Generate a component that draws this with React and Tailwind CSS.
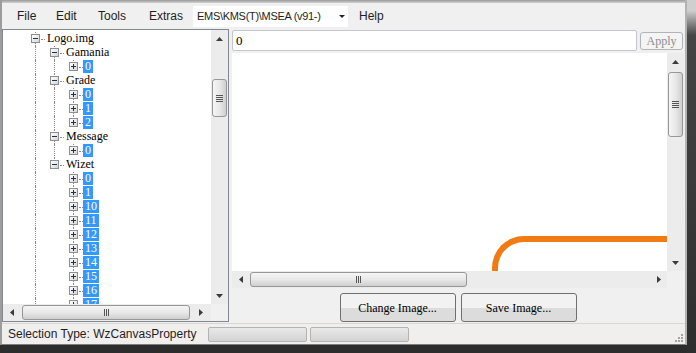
import React from 'react';

const TREE = {
  label: 'Logo.img',
  children: [
    { label: 'Gamania', children: ['0'] },
    { label: 'Grade', children: ['0', '1', '2'] },
    { label: 'Message', children: ['0'] },
    { label: 'Wizet', children: ['0', '1', '10', '11', '12', '13', '14', '15', '16', '17'] },
  ],
};

// flatten the tree into visible rows with line info
function flatten() {
  const rows = [{ depth: 0, label: TREE.label, expanded: true, hasNext: true, anc: [] }];
  TREE.children.forEach((c, i) => {
    const last = i === TREE.children.length - 1;
    rows.push({ depth: 1, label: c.label, expanded: true, hasNext: !last, anc: [true] });
    c.children.forEach((leaf, j) => {
      rows.push({
        depth: 2,
        label: leaf,
        selected: true,
        hasNext: j < c.children.length - 1,
        anc: [true, !last],
      });
    });
  });
  return rows;
}

const center = (d) => 32 + d * 19;

function Expander({ expanded }) {
  return (
    <div className="absolute top-[2px] w-[9px] h-[9px] border border-[#8e8f8f] bg-gradient-to-br from-white to-[#d6d6d6] flex items-center justify-center">
      <div className="relative w-[5px] h-[5px]">
        <div className="absolute left-0 top-[2px] w-[5px] h-px bg-[#1c3157]" />
        {!expanded && <div className="absolute left-[2px] top-0 w-px h-[5px] bg-[#1c3157]" />}
      </div>
    </div>
  );
}

function TreeRow({ row }) {
  const c = center(row.depth);
  return (
    <div className="relative h-[14px] shrink-0">
      {row.anc.map((on, d) =>
        on ? (
          <div key={d} className="absolute top-0 bottom-0 border-l border-dotted border-[#8a8a8a]" style={{ left: center(d) }} />
        ) : null
      )}
      <div className="absolute top-0 h-[7px] border-l border-dotted border-[#8a8a8a]" style={{ left: c }} />
      {row.hasNext && (
        <div className="absolute top-[7px] bottom-0 border-l border-dotted border-[#8a8a8a]" style={{ left: c }} />
      )}
      <div style={{ left: c - 4 }} className="absolute top-0 h-full">
        <Expander expanded={row.expanded} />
      </div>
      <div className="absolute top-[7px] w-[4px] border-t border-dotted border-[#8a8a8a]" style={{ left: c + 6 }} />
      <div
        className={`absolute top-0 h-[13px] leading-[13px] px-[2px] text-[12px] font-['Liberation_Serif',serif] ${
          row.selected ? 'bg-[#3399ff] text-white' : 'text-black'
        }`}
        style={{ left: c + 10 }}
      >
        {row.label}
      </div>
    </div>
  );
}

function ArrowUp() {
  return (
    <svg width="7" height="4" viewBox="0 0 7 4"><polygon points="0,4 7,4 3.5,0" fill="#3b3b3b" /></svg>
  );
}
function ArrowDown() {
  return (
    <svg width="7" height="4" viewBox="0 0 7 4"><polygon points="0,0 7,0 3.5,4" fill="#3b3b3b" /></svg>
  );
}
function ArrowLeft() {
  return (
    <svg width="4" height="7" viewBox="0 0 4 7"><polygon points="4,0 4,7 0,3.5" fill="#3b3b3b" /></svg>
  );
}
function ArrowRight() {
  return (
    <svg width="4" height="7" viewBox="0 0 4 7"><polygon points="0,0 0,7 4,3.5" fill="#3b3b3b" /></svg>
  );
}

function VGrip() {
  return (
    <div className="flex flex-col gap-[1px]">
      <div className="w-[7px] h-px bg-[#555]" />
      <div className="w-[7px] h-px bg-[#555]" />
      <div className="w-[7px] h-px bg-[#555]" />
      <div className="w-[7px] h-px bg-[#555]" />
    </div>
  );
}

function HGrip() {
  return (
    <div className="flex gap-[1px]">
      <div className="w-px h-[7px] bg-[#555]" />
      <div className="w-px h-[7px] bg-[#555]" />
      <div className="w-px h-[7px] bg-[#555]" />
    </div>
  );
}

export default function App() {
  const rows = flatten();
  return (
    <div className="w-[696px] h-[353px] bg-[#2c2c2c] flex overflow-hidden font-['Liberation_Sans',Arial,sans-serif]">
      <div className="w-[687px] h-[345px] flex flex-col border-l-2 border-r-2 border-b border-l-[#9c9c9c] border-r-[#b2b2b2] border-b-[#7d7d7d] bg-[#f0f0f0]">
        {/* window top edge */}
        <div className="h-[3px] bg-gradient-to-b from-[#9a9a9a] to-[#d2d2d2]" />

        {/* menu bar */}
        <div className="h-[26px] flex items-center pl-[15px] text-[12px] text-[#1e1e1e] bg-[#f0f0f0]">
          <div className="w-[39px]">File</div>
          <div className="w-[42px]">Edit</div>
          <div className="w-[51px]">Tools</div>
          <div className="w-[44px]">Extras</div>
          <div className="w-[155px] h-[21px] mt-[1px] bg-white flex items-center pl-[4px] pr-[3px] text-[11px] tracking-[-0.3px]">
            <span className="flex-1">EMS\KMS(T)\MSEA (v91-)</span>
            <svg width="6" height="3" viewBox="0 0 6 3"><polygon points="0,0 6,0 3,3" fill="#222" /></svg>
          </div>
          <div className="ml-[11px]">Help</div>
        </div>

        {/* body */}
        <div className="h-[294px] flex">
          {/* tree panel */}
          <div className="w-[227px] h-[293px] border border-[#828790] bg-white flex flex-col">
            <div className="flex h-[274px]">
              <div className="flex-1 flex flex-col overflow-hidden pt-[2px]">
                {rows.map((r, i) => (
                  <TreeRow key={i} row={r} />
                ))}
              </div>
              <div className="w-[17px] bg-[#ececec] flex flex-col">
                <div className="h-[17px] flex items-center justify-center"><ArrowUp /></div>
                <div className="flex-1 flex flex-col items-center">
                  <div className="mt-[32px] w-[15px] h-[38px] rounded-[3px] border border-[#979797] bg-gradient-to-r from-[#f5f5f5] via-[#e8e8e8] to-[#cfcfcf] flex items-center justify-center">
                    <VGrip />
                  </div>
                </div>
                <div className="h-[17px] flex items-center justify-center"><ArrowDown /></div>
              </div>
            </div>
            <div className="h-[17px] flex">
              <div className="w-[208px] bg-[#ececec] flex items-center">
                <div className="w-[17px] h-full flex items-center justify-center"><ArrowLeft /></div>
                <div className="ml-[2px] w-[168px] h-[15px] rounded-[3px] border border-[#979797] bg-gradient-to-b from-[#f5f5f5] via-[#e8e8e8] to-[#cfcfcf] flex items-center justify-center">
                  <HGrip />
                </div>
                <div className="flex-1 h-full flex items-center justify-center"><ArrowRight /></div>
              </div>
              <div className="flex-1 bg-[#f0f0f0]" />
            </div>
          </div>

          {/* right panel */}
          <div className="flex-1 pl-[3px] pr-[1px] flex flex-col">
            <div className="h-[21px] mt-[1px] flex items-center">
              <div className="w-[405px] h-[21px] bg-white border border-[#c5c7cc] rounded-[2px] pl-[3px] text-[13px] leading-[19px] font-['Liberation_Serif',serif]">
                0
              </div>
              <div className="ml-[3px] w-[43px] h-[18px] border border-[#b1b5b8] rounded-[3px] bg-[#f4f4f4] text-[12px] leading-[16px] text-center text-[#8c8c8c] font-['Liberation_Serif',serif]">
                Apply
              </div>
            </div>

            {/* canvas */}
            <div className="mt-[2px] flex flex-col">
              <div className="h-[218px] flex">
                <div className="flex-1 bg-white relative overflow-hidden">
                  <div className="absolute left-[260px] top-[183px] w-[300px] h-[120px] border-t-[6px] border-l-[6px] border-[#f07a14] rounded-tl-[32px]" />
                </div>
                <div className="w-[17px] bg-[#ececec] flex flex-col">
                  <div className="h-[17px] flex items-center justify-center"><ArrowUp /></div>
                  <div className="flex-1 flex flex-col items-center">
                    <div className="mt-[2px] w-[15px] h-[65px] rounded-[3px] border border-[#979797] bg-gradient-to-r from-[#f5f5f5] via-[#e8e8e8] to-[#cfcfcf] flex items-center justify-center">
                      <VGrip />
                    </div>
                  </div>
                  <div className="h-[17px] flex items-center justify-center"><ArrowDown /></div>
                </div>
              </div>
              <div className="h-[17px] flex">
                <div className="flex-1 bg-[#ececec] flex items-center">
                  <div className="w-[17px] h-full flex items-center justify-center"><ArrowLeft /></div>
                  <div className="ml-px w-[217px] h-[15px] rounded-[3px] border border-[#979797] bg-gradient-to-b from-[#f5f5f5] via-[#e8e8e8] to-[#cfcfcf] flex items-center justify-center">
                    <HGrip />
                  </div>
                  <div className="flex-1" />
                  <div className="w-[17px] h-full flex items-center justify-center"><ArrowRight /></div>
                </div>
                <div className="w-[17px] bg-[#f0f0f0]" />
              </div>
            </div>

            {/* buttons */}
            <div className="mt-[5px] flex justify-center gap-[5px] pl-[2px] pr-[2px]">
              <button className="w-[116px] h-[29px] rounded-[3px] border border-[#707070] bg-gradient-to-b from-[#f2f2f2] from-50% to-[#dcdcdc] to-50% text-[12px] font-['Liberation_Serif',serif] text-black">
                Change Image...
              </button>
              <button className="w-[116px] h-[29px] rounded-[3px] border border-[#707070] bg-gradient-to-b from-[#f2f2f2] from-50% to-[#dcdcdc] to-50% text-[12px] font-['Liberation_Serif',serif] text-black">
                Save Image...
              </button>
            </div>
          </div>
        </div>

        {/* status bar */}
        <div className="h-[21px] border-t border-[#d7d7d7] bg-[#f1eeee] flex items-center pl-[6px] text-[12px] text-[#1e1e1e] relative">
          <span className="w-[200px]">Selection Type: WzCanvasProperty</span>
          <div className="w-[99px] h-[15px] border border-[#b3b3b3] rounded-[2px] bg-gradient-to-b from-[#e9e9e9] to-[#d3d3d3]" />
          <div className="ml-[3px] w-[99px] h-[15px] border border-[#b3b3b3] rounded-[2px] bg-gradient-to-b from-[#e9e9e9] to-[#d3d3d3]" />
          <div className="absolute right-[2px] bottom-[2px] grid grid-cols-3 gap-[1px] w-[8px]">
            <span />
            <span />
            <span className="w-[2px] h-[2px] bg-[#a3a3a3]" />
            <span />
            <span className="w-[2px] h-[2px] bg-[#a3a3a3]" />
            <span className="w-[2px] h-[2px] bg-[#a3a3a3]" />
            <span className="w-[2px] h-[2px] bg-[#a3a3a3]" />
            <span className="w-[2px] h-[2px] bg-[#a3a3a3]" />
            <span className="w-[2px] h-[2px] bg-[#a3a3a3]" />
          </div>
        </div>
      </div>
      <div className="flex-1 bg-gradient-to-b from-[#cfcfcf] from-[3%] via-[#454545] via-[10%] to-[#2e2e2e]" />
    </div>
  );
}
